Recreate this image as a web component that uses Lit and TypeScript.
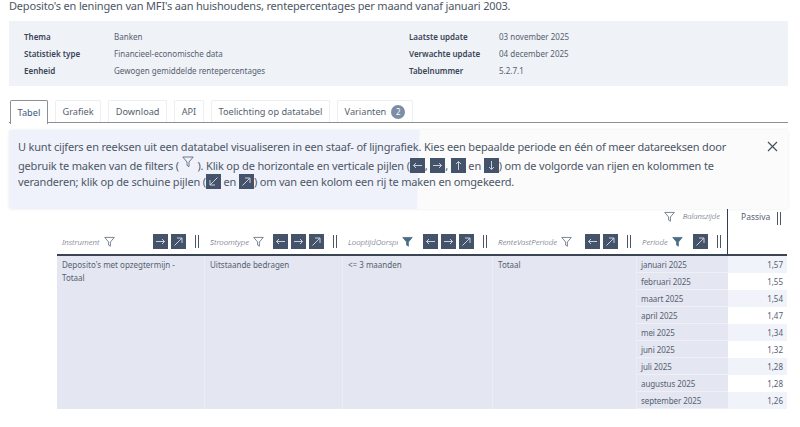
import { LitElement, html, css, svg } from "lit";
import { customElement } from "lit/decorators.js";

const ARROWS: Record<string, string> = {
  l: "M12 7.5H3.5M6 5 3.5 7.5 6 10",
  r: "M3 7.5h8.5M9 5l2.5 2.5L9 10",
  u: "M7.5 12V3.5M5 6l2.5-2.5L10 6",
  d: "M7.5 3v8.5M5 9l2.5 2.5L10 9",
  ne: "M3.5 11.5 11 4M6 4h5v5",
  sw: "M11.5 3.5 4 11M4 6v5h5",
};

const arrow = (k: string) => html`<svg class="arr" viewBox="0 0 15 15"><path d=${ARROWS[k]}></path></svg>`;
const funnel = (on = false) =>
  html`<svg class="fun ${on ? "on" : ""}" viewBox="0 0 12 12"><path d="M.8 1h10.4L7 6v4.6L5 9.4V6z"></path></svg>`;
const grip = () => html`<span class="grip"></span>`;
const closeIcon = svg`<path d="M1 1l9 9M10 1l-9 9"></path>`;

const META_L = [["Thema", "Banken"], ["Statistiek type", "Financieel-economische data"], ["Eenheid", "Gewogen gemiddelde rentepercentages"]];
const META_R = [["Laatste update", "03 november 2025"], ["Verwachte update", "04 december 2025"], ["Tabelnummer", "5.2.7.1"]];
const TABS = ["Tabel", "Grafiek", "Download", "API", "Toelichting op datatabel"];
const HEADS: { label: string; on?: boolean; btn: string[] }[] = [
  { label: "Instrument", btn: ["r", "ne"] },
  { label: "Stroomtype", btn: ["l", "r", "ne"] },
  { label: "LooptijdOorspr", on: true, btn: ["l", "r", "ne"] },
  { label: "RenteVastPeriode", btn: ["l", "ne"] },
  { label: "Periode", on: true, btn: ["ne"] },
];
const ROWS = [
  ["januari 2025", "1,57"], ["februari 2025", "1,55"], ["maart 2025", "1,54"],
  ["april 2025", "1,47"], ["mei 2025", "1,34"], ["juni 2025", "1,32"],
  ["juli 2025", "1,28"], ["augustus 2025", "1,28"], ["september 2025", "1,26"],
];
const DIMS = ["Deposito's met opzegtermijn - Totaal", "Uitstaande bedragen", "<= 3 maanden", "Totaal"];

@customElement("app-root")
export class AppRoot extends LitElement {
  static styles = css`
    :host { display: block; width: 800px; height: 427px; overflow: hidden; background: #fff; font-family: "Noto Sans", sans-serif; color: #4a5568; }
    .page { padding: 0 12px 0 9px; display: flex; flex-direction: column; }
    .title { font-size: 11px; letter-spacing: -0.18px; line-height: 11px; height: 21px; color: #4d5766; white-space: nowrap; }
    .meta { background: #eff2f7; height: 65px; padding: 7px 15px; box-sizing: border-box; display: grid; grid-template-columns: 385px 1fr; font-size: 8px; color: #566070; }
    .meta-col { display: grid; grid-auto-rows: 17px; align-items: center; }
    .meta-row { display: flex; }
    .meta-row b { font-weight: 600; color: #3a4556; width: 90px; }
    .tabs { display: flex; gap: 7px; margin-top: 14px; height: 23px; border-bottom: 1px solid #8b9097; box-sizing: border-box; padding-left: 1px; }
    .tab { font-size: 9.2px; padding: 0 6.6px; display: flex; align-items: center; gap: 5px; border: 1px solid #eceef1; border-bottom: none; border-radius: 2px 2px 0 0; color: #565f6e; }
    .tab.active { border-color: #8b9097; color: #3d5880; height: 23px; background: #fff; }
    .badge { width: 14px; height: 14px; border-radius: 50%; background: #7b8ea8; color: #fff; font-size: 8px; display: flex; align-items: center; justify-content: center; }
    .alert { margin-top: 7px; height: 79px; box-sizing: border-box; padding: 8px 9px 0; font-size: 11px; letter-spacing: -0.18px; color: #4d5766; border-radius: 2px; background: linear-gradient(92deg, #f0f2fb 0 410px, #fbfbfc 411px); box-shadow: 0 0 3px rgba(60, 70, 90, 0.12); position: relative; white-space: nowrap; }
    .line { height: 17.5px; line-height: 17.5px; }
    .close { position: absolute; right: 10px; top: 11px; width: 11px; height: 11px; fill: none; stroke: #46505f; stroke-width: 1.2; }
    .ib { display: inline-flex; width: 15px; height: 15px; background: #44526a; vertical-align: -3px; }
    .arr { width: 15px; height: 15px; fill: none; stroke: #c8d0dc; stroke-width: 1; }
    .alert .fun { width: 12px; height: 12px; vertical-align: 2px; margin: 0 1px 0 3px; }
    .fun { width: 11px; height: 12px; fill: none; stroke: #4a5c6e; stroke-width: 0.8; flex: none; }
    .fun.on { fill: #4a6a85; stroke: #4a6a85; }
    .table { margin-left: 48px; width: 730px; display: grid; grid-template-columns: 148px 138px 150px 144px 91px 59px; grid-template-rows: 23px 24px repeat(9, 17px); font-size: 8px; color: #566070; }
    .top { grid-column: 1 / 6; display: flex; justify-content: flex-end; align-items: flex-start; gap: 8px; padding: 2px 7px 0 0; border-right: 1px solid #333d4c; font-size: 7.6px; font-style: italic; font-weight: 300; }
    .passiva { display: flex; align-items: flex-start; justify-content: space-between; padding: 2px 6px 0 13px; font-size: 8.5px; }
    .passiva .grip { margin-top: 1px; }
    .head { display: flex; align-items: center; padding: 0 0 3px 5px; border-bottom: 2px solid #3a4453; font-size: 7.8px; font-style: italic; font-weight: 300; }
    .head .lab { overflow: hidden; white-space: nowrap; margin-right: 4px; }
    .head .btns { margin-left: auto; display: flex; gap: 3px; }
    .head .grip { margin: 0 6px 0 9px; }
    .head.last { border-right: 1px solid #333d4c; }
    .grip { width: 2px; height: 13px; border-left: 1px solid #4a5568; border-right: 1px solid #4a5568; flex: none; }
    .dim { grid-row: 3 / span 9; background: #e4e7f1; padding: 2px 5px; line-height: 13px; border-right: 1px solid #eaedf4; }
    .per { background: #e4e7f1; padding-left: 4px; display: flex; align-items: center; border-bottom: 1px solid #eef0f6; letter-spacing: -0.08px; }
    .val { display: flex; align-items: center; justify-content: flex-end; padding-right: 4px; background: #fff; }
    .val.alt { background: #f0f3f9; }
    .lab.w { width: 50px; flex: none; }
  `;

  render() {
    const ib = (k: string) => html`<span class="ib">${arrow(k)}</span>`;
    return html`<div class="page">
      <div class="title">Deposito's en leningen van MFI's aan huishoudens, rentepercentages per maand vanaf januari 2003.</div>
      <div class="meta">
        <div class="meta-col">${META_L.map(([k, v]) => html`<div class="meta-row"><b>${k}</b><span>${v}</span></div>`)}</div>
        <div class="meta-col">${META_R.map(([k, v]) => html`<div class="meta-row"><b>${k}</b><span>${v}</span></div>`)}</div>
      </div>
      <div class="tabs">
        ${TABS.map((t, i) => html`<div class="tab ${i === 0 ? "active" : ""}">${t}</div>`)}
        <div class="tab">Varianten <span class="badge">2</span></div>
      </div>
      <div class="alert">
        <div class="line">U kunt cijfers en reeksen uit een datatabel visualiseren in een staaf- of lijngrafiek. Kies een bepaalde periode en één of meer datareeksen door</div>
        <div class="line">gebruik te maken van de filters (${funnel()} ). Klik op de horizontale en verticale pijlen (${ib("l")}, ${ib("r")}, ${ib("u")} en ${ib("d")}) om de volgorde van rijen en kolommen te</div>
        <div class="line">veranderen; klik op de schuine pijlen (${ib("sw")} en ${ib("ne")}) om van een kolom een rij te maken en omgekeerd.</div>
        <svg class="close" viewBox="0 0 11 11">${closeIcon}</svg>
      </div>
      <div class="table">
        <div class="top">${funnel()}<span>Balanszijde</span></div>
        <div class="passiva">Passiva ${grip()}</div>
        ${HEADS.map((h, i) => html`<div class="head ${i === 4 ? "last" : ""}">
          <span class="lab ${i === 2 ? "w" : ""}">${h.label}</span>${funnel(h.on)}
          <span class="btns">${h.btn.map((b) => ib(b))}</span>${grip()}
        </div>`)}
        <div class="head"></div>
        ${DIMS.map((d) => html`<div class="dim">${d}</div>`)}
        ${ROWS.map(([p, v], i) => html`<div class="per" style="grid-column:5;grid-row:${i + 3}">${p}</div>
          <div class="val ${i % 2 === 0 ? "alt" : ""}" style="grid-column:6;grid-row:${i + 3}">${v}</div>`)}
      </div>
    </div>`;
  }
}
